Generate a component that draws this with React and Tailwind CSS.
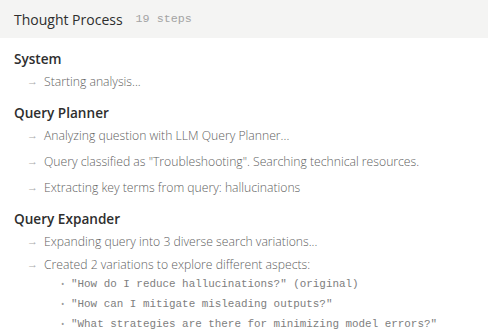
const sections = [
  { title: 'System', items: [{ text: 'Starting analysis...' }] },
  {
    title: 'Query Planner',
    items: [
      { text: 'Analyzing question with LLM Query Planner...' },
      { text: 'Query classified as "Troubleshooting". Searching technical resources.' },
      { text: 'Extracting key terms from query: hallucinations' },
    ],
  },
  {
    title: 'Query Expander',
    items: [
      { text: 'Expanding query into 3 diverse search variations...' },
      {
        text: 'Created 2 variations to explore different aspects:',
        subs: [
          '"How do I reduce hallucinations?" (original)',
          '"How can I mitigate misleading outputs?"',
          '"What strategies are there for minimizing model errors?"',
        ],
      },
    ],
  },
];

const StepItem = ({ item }) => (
  <div className={item.subs ? 'pt-[2px]' : 'py-[5px]'}>
    <div className="flex items-center h-4 leading-4">
      <span className="w-[30px] pl-[13px] text-[11px] leading-4 text-[#aaaaaa] -translate-y-[1px]">→</span>
      <span className="text-[12.2px] text-[#5f5f5f] font-light">{item.text}</span>
    </div>
    {item.subs && (
      <ul className="mt-[1px] pl-[47px]">
        {item.subs.map((s) => (
          <li key={s} className="flex items-center h-5 leading-5">
            <span className="w-[10px] text-[9px] text-[#999999]">•</span>
            <span className="font-['Liberation_Mono',monospace] text-[10.9px] text-[#7e7e7e]">{s}</span>
          </li>
        ))}
      </ul>
    )}
  </div>
);

export default function App() {
  return (
    <div className="w-[488px] h-[336px] overflow-hidden bg-white font-['Open_Sans',sans-serif]">
      <div className="h-[38px] bg-[#f4f4f3] flex items-center px-[14px]">
        <span className="text-[14px] text-[#2e2e2e]">Thought Process</span>
        <span className="ml-[13px] font-['Liberation_Mono',monospace] text-[11.7px] text-[#a3a3a3] pt-[1px]">19 steps</span>
      </div>
      <div className="px-[14px] pt-[11px] flex flex-col gap-2">
        {sections.map((sec) => (
          <div key={sec.title}>
            <div className="h-5 leading-5 text-[13.6px] font-semibold text-[#2e2e2e]">{sec.title}</div>
            {sec.items.map((it) => (
              <StepItem key={it.text} item={it} />
            ))}
          </div>
        ))}
      </div>
    </div>
  );
}
